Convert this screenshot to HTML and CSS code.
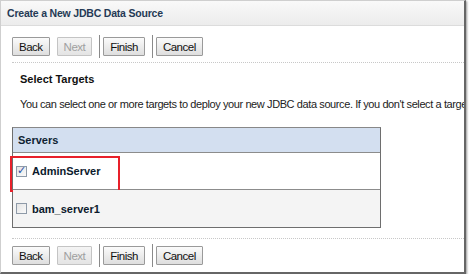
FILE: index.html
```html
<!DOCTYPE html>
<html lang="en">
<head>
    <meta charset="UTF-8">
    <title>Create a New JDBC Data Source</title>
    <link rel="stylesheet" href="styles.css">
</head>
<body>
    <div class="frame">
        <div class="title-bar">Create a New JDBC Data Source</div>
        <div class="content">
            <div class="toolbar">
                <button class="btn">Back</button>
                <button class="btn" disabled>Next</button>
                <span class="sep"></span>
                <button class="btn">Finish</button>
                <span class="sep"></span>
                <button class="btn">Cancel</button>
            </div>
            <div class="rule"></div>

            <h3 class="section">Select Targets</h3>
            <p class="intro">You can select one or more targets to deploy your new JDBC data source. If you don't select a target, the data source will be created but not deployed.</p>

            <div class="servers">
                <div class="servers-head">Servers</div>
                <div class="server-row">
                    <label><input type="checkbox" checked> AdminServer</label>
                    <span class="callout"></span>
                </div>
                <div class="server-row alt">
                    <label><input type="checkbox"> bam_server1</label>
                </div>
            </div>

            <div class="rule bottom"></div>
            <div class="toolbar last">
                <button class="btn">Back</button>
                <button class="btn" disabled>Next</button>
                <span class="sep"></span>
                <button class="btn">Finish</button>
                <span class="sep"></span>
                <button class="btn">Cancel</button>
            </div>
        </div>
    </div>
</body>
</html>
```

FILE: styles.css
```css
body {
    margin: 0;
    font-family: "Liberation Sans", Tahoma, sans-serif;
    background: #fff;
    overflow: hidden;
}
.frame {
    width: 463px;
    height: 271px;
    border-left: 1px solid #cfcfcf;
    border-top: 1px solid #cfcfcf;
    border-right: 2px solid #666;
    border-bottom: 2px solid #666;
    box-shadow: 1px 1px 2px #999;
    overflow: hidden;
    position: relative;
}
.title-bar {
    height: 24px;
    line-height: 24px;
    padding-left: 6px;
    background: linear-gradient(#f9f9f9, #ececec);
    border-bottom: 1px solid #dcdcdc;
    font-size: 10.5px;
    letter-spacing: -0.2px;
    font-weight: bold;
    color: #253a55;
    white-space: nowrap;
}
.content {
    padding: 0 0 0 11px;
}
.toolbar {
    display: flex;
    align-items: center;
    height: 23px;
    margin-top: 9px;
}
.toolbar.last {
    margin-top: 5px;
}
.btn {
    height: 19px;
    padding: 0 6px;
    margin-right: 7px;
    font-family: "Liberation Sans", Arial, sans-serif;
    font-size: 11.5px;
    letter-spacing: -0.5px;
    color: #111;
    background: linear-gradient(#fbfbfb, #dedede);
    border: 1px solid #9a9a9a;
    border-radius: 1px;
}
.btn[disabled] {
    color: #a0a0a0;
    border-color: #c4c4c4;
    background: linear-gradient(#f4f4f4, #e4e4e4);
}
.sep {
    width: 1px;
    height: 23px;
    background: #8a8a8a;
    margin: 0 3px 0 0;
}
.rule {
    margin-top: 4px;
    border-top: 1px dotted #c8c8c8;
}
.rule.bottom {
    margin-top: 10px;
}
.section {
    margin: 10px 0 0 8px;
    font-size: 11px;
    font-weight: bold;
    color: #111;
}
.intro {
    margin: 13px 0 0 8px;
    font-size: 11px;
    letter-spacing: -0.4px;
    color: #222;
    white-space: nowrap;
}
.servers {
    margin-top: 17px;
    width: 367px;
    border: 1px solid #6e6e6e;
    border-top-color: #888;
}
.servers-head {
    height: 24px;
    line-height: 24px;
    padding-left: 5px;
    background: #d3dff0;
    border-bottom: 1px solid #8c8c8c;
    font-size: 11px;
    font-weight: bold;
    color: #0f1f33;
}
.server-row {
    position: relative;
    height: 36px;
    padding-left: 3px;
    display: flex;
    align-items: center;
    border-bottom: 1px solid #8c8c8c;
    font-size: 11px;
    font-weight: bold;
    color: #0b1a2c;
}
.server-row.alt {
    height: 37px;
    background: #f4f4f4;
    border-bottom: none;
}
.server-row label {
    display: flex;
    align-items: center;
}
.server-row input {
    appearance: none;
    -webkit-appearance: none;
    position: relative;
    width: 11px;
    height: 11px;
    margin: 0 5px 0 0;
    border: 1px solid #8e9aa8;
    background: linear-gradient(135deg, #e4e4e4, #fafafa);
}
.server-row input:checked::after {
    content: "\2713";
    position: absolute;
    left: 0;
    top: -3px;
    font-size: 11px;
    font-weight: normal;
    color: #2a4fa8;
}
.callout {
    position: absolute;
    left: -3px;
    top: 3px;
    width: 106px;
    height: 32px;
    border: 2px solid #e8202a;
}
```
